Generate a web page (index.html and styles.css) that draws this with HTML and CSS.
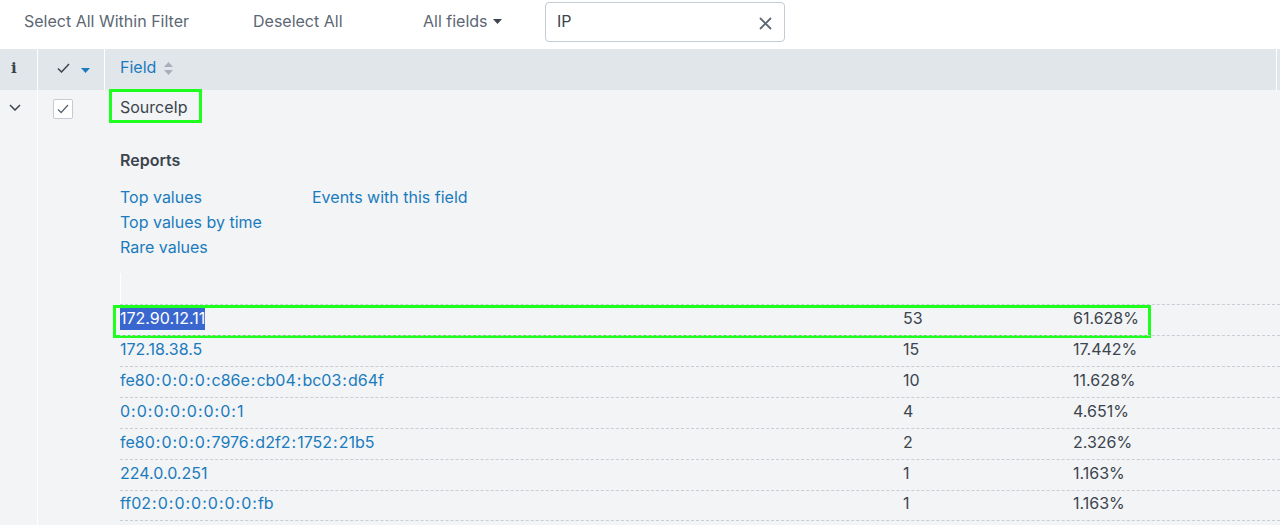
FILE: index.html
```html
<!DOCTYPE html>
<html>
<head>
<meta charset="utf-8">
<link rel="stylesheet" href="styles.css">
</head>
<body>
<div class="toolbar">
  <span class="tb-item tb-select">Select All Within Filter</span>
  <span class="tb-item tb-deselect">Deselect All</span>
  <span class="tb-item tb-fields">All fields <svg class="caret" width="9" height="5" viewBox="0 0 9 5"><path d="M0 0h9L4.5 5z" fill="#3c444d"/></svg></span>
  <div class="search">
    <span class="search-text">IP</span>
    <svg class="clear" width="13" height="13" viewBox="0 0 13 13"><path d="M1 1L12 12M12 1L1 12" stroke="#5c6773" stroke-width="1.8"/></svg>
  </div>
</div>

<div class="header">
  <div class="h-info">i</div>
  <div class="h-check">
    <svg width="13" height="10" viewBox="0 0 13 10"><path d="M1 5.5L4.5 9L12 1" fill="none" stroke="#3c444d" stroke-width="1.5"/></svg>
    <svg class="h-caret" width="9" height="5" viewBox="0 0 9 5"><path d="M0 0h9L4.5 5z" fill="#1a7bbd"/></svg>
  </div>
  <div class="h-field">Field
    <svg class="sort" width="9" height="13" viewBox="0 0 9 13"><path d="M4.5 0L9 5H0z M0 8h9L4.5 13z" fill="#a7b0ba"/></svg>
  </div>
  <div class="h-end"></div>
</div>

<div class="body">
  <div class="b-expand">
    <svg class="chev" width="12" height="7" viewBox="0 0 12 7"><path d="M1 1L6 6L11 1" fill="none" stroke="#3c444d" stroke-width="1.5"/></svg>
  </div>
  <div class="b-main">
    <div class="field-row">
      <div class="b-check">
        <span class="checkbox"><svg width="12" height="10" viewBox="0 0 12 10"><path d="M1 5.5L4.2 8.5L11 1" fill="none" stroke="#5c6773" stroke-width="1.3"/></svg></span>
      </div>
      <div class="b-name"><span class="name-box">SourceIp</span></div>
    </div>
    <div class="details">
      <div class="reports-title">Reports</div>
      <div class="links">
        <div class="link-col col1">
          <a>Top values</a>
          <a>Top values by time</a>
          <a>Rare values</a>
        </div>
        <div class="link-col">
          <a>Events with this field</a>
        </div>
      </div>
      <div class="values">
        <div class="values-head"><span class="vh-cell"></span></div>
        <div class="vrow"><span class="vcol"><span class="sel">172.90.12.11</span></span><span class="ccol">53</span><span class="pcol">61.628%</span><div class="row-mark"></div></div>
        <div class="vrow"><span class="vcol">172.18.38.5</span><span class="ccol">15</span><span class="pcol">17.442%</span></div>
        <div class="vrow"><span class="vcol">fe80<i>:</i>0<i>:</i>0<i>:</i>0<i>:</i>c86e<i>:</i>cb04<i>:</i>bc03<i>:</i>d64f</span><span class="ccol">10</span><span class="pcol">11.628%</span></div>
        <div class="vrow"><span class="vcol">0<i>:</i>0<i>:</i>0<i>:</i>0<i>:</i>0<i>:</i>0<i>:</i>0<i>:</i>1</span><span class="ccol">4</span><span class="pcol">4.651%</span></div>
        <div class="vrow"><span class="vcol">fe80<i>:</i>0<i>:</i>0<i>:</i>0<i>:</i>7976<i>:</i>d2f2<i>:</i>1752<i>:</i>21b5</span><span class="ccol">2</span><span class="pcol">2.326%</span></div>
        <div class="vrow"><span class="vcol">224.0.0.251</span><span class="ccol">1</span><span class="pcol">1.163%</span></div>
        <div class="vrow"><span class="vcol">ff02<i>:</i>0<i>:</i>0<i>:</i>0<i>:</i>0<i>:</i>0<i>:</i>0<i>:</i>fb</span><span class="ccol">1</span><span class="pcol">1.163%</span></div>
      </div>
    </div>
  </div>
</div>
</body>
</html>
```

FILE: styles.css
```css
* { box-sizing: border-box; }
html, body { margin: 0; padding: 0; }
body {
  font-family: "Inter", "Liberation Sans", sans-serif;
  font-size: 16px;
  color: #3c444d;
  background: #ffffff;
  width: 1280px;
  height: 525px;
  overflow: hidden;
}

.toolbar {
  height: 49px;
  display: flex;
  align-items: flex-start;
  padding-left: 24px;
  background: #fff;
}
.tb-item {
  color: #5c6773;
  line-height: 20px;
  margin-top: 11px;
  white-space: nowrap;
}
.tb-select { width: 229px; }
.tb-deselect { width: 170px; }
.tb-fields { width: 122px; display: inline-flex; align-items: center; gap: 5px; }
.caret { margin-top: 1px; }
.search {
  margin-top: 2px;
  width: 240px;
  height: 40px;
  border: 1px solid #c3cbd4;
  border-radius: 4px;
  display: flex;
  align-items: center;
  padding: 0 11px;
  justify-content: space-between;
}
.search-text { color: #3c444d; margin-top: -3px; }
.clear { margin-top: 2px; margin-right: 1px; }

.header {
  height: 41px;
  background: #e1e6eb;
  display: flex;
  align-items: stretch;
}
.h-info {
  width: 38px;
  border-right: 1px solid #fff;
  font-family: "DejaVu Serif", "Liberation Serif", serif;
  font-weight: bold;
  font-size: 15px;
  color: #3c444d;
  display: flex;
  align-items: center;
  padding-left: 11px;
  padding-bottom: 3px;
}
.h-check {
  width: 67px;
  border-right: 1px solid #fff;
  display: flex;
  align-items: center;
  padding-left: 19px;
  padding-bottom: 3px;
}
.h-caret { margin-left: 11px; margin-top: 4px; }
.h-field {
  flex: 1;
  display: flex;
  align-items: center;
  padding-left: 15px;
  padding-bottom: 5px;
  color: #1a7bbd;
}
.sort { margin-left: 8px; margin-top: 2px; }
.h-end {
  width: 4px;
  border-left: 1px solid #fff;
}

.body {
  display: flex;
  background: #f2f4f6;
  height: 435px;
}
.b-expand {
  width: 38px;
  border-right: 1px solid #fff;
  padding-top: 14px;
  padding-left: 9px;
}
.chev { display: block; }
.b-main { flex: 1; }
.field-row {
  display: flex;
  height: 32px;
}
.b-check {
  width: 67px;
  padding-left: 15px;
  padding-top: 9px;
}
.checkbox {
  width: 20px;
  height: 20px;
  border: 1px solid #c3cbd4;
  border-radius: 2px;
  background: #fff;
  display: flex;
  align-items: center;
  justify-content: center;
}
.b-name { padding-left: 4px; margin-top: -1px; }
.name-box {
  display: inline-flex;
  align-items: center;
  height: 34px;
  width: 93px;
  border: 3px solid #1dff1d;
  padding: 1px 0 0 8px;
  color: #3c444d;
}

.details { padding-left: 82px; }
.reports-title {
  font-weight: 600;
  color: #3c444d;
  margin-top: 28px;
  line-height: 20px;
}
.links {
  display: flex;
  margin-top: 15px;
  line-height: 25px;
}
.link-col { display: flex; flex-direction: column; }
.col1 { width: 192px; }
.links a { color: #1a7bbd; }

.values { margin-top: 13px; }
.values-head { height: 31px; }
.vh-cell {
  display: block;
  height: 31px;
  border-left: 1px solid #fff;
}
.vrow {
  position: relative;
  display: flex;
  height: 31px;
  align-items: center;
  border-top: 1px dashed #c8ced5;
  padding-bottom: 5px;
}
.vrow:last-child { border-bottom: 1px dashed #c8ced5; }
.vcol { width: 783px; color: #1a7bbd; white-space: nowrap; }
.vcol i { font-style: normal; padding: 0 1px; }
.ccol { width: 170px; color: #3c444d; }
.pcol { color: #3c444d; }
.sel {
  background: #3a67cf;
  color: #fff;
  padding: 2px 0 2px;
}
.row-mark {
  position: absolute;
  left: -7px;
  top: 0;
  width: 1038px;
  height: 33px;
  border: 3px solid #1dff1d;
}
```
